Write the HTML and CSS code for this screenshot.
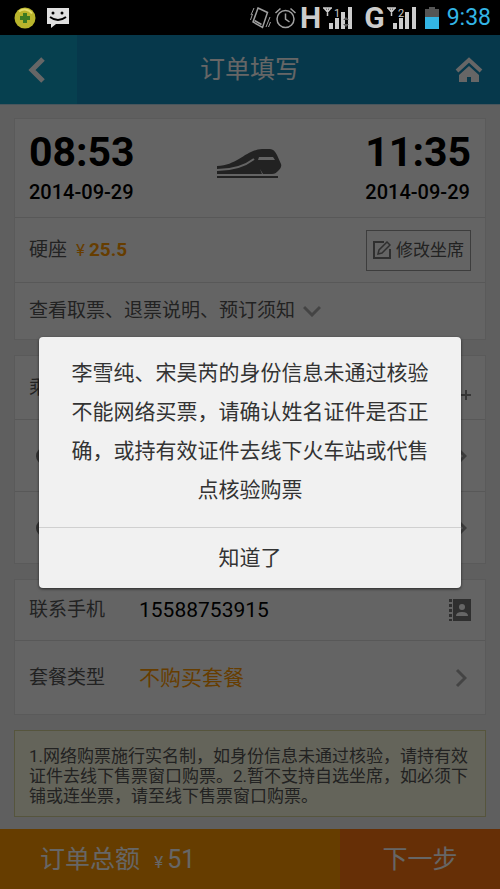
FILE: index.html
```html
<!DOCTYPE html>
<html lang="zh-CN">
<head>
    <meta charset="UTF-8">
    <meta name="viewport" content="width=device-width, initial-scale=1.0">
    <title>订单填写</title>
    <link rel="stylesheet" href="styles.css">
</head>
<body>
    <!-- Status bar -->
    <div class="status">
        <div class="status-left">
            <svg width="22" height="22" viewBox="0 0 22 22">
                <circle cx="11" cy="11" r="10.5" fill="#b9b52c"/>
                <path d="M2 6a10.5 10.5 0 0 0 14 14A10.5 10.5 0 0 1 2 6z" fill="#4f9a26"/>
                <path d="M5 4.500a9 9 0 0 1 13 2" fill="none" stroke="#e4dc6a" stroke-width="2"/>
                <path d="M9 6h4v3h3v4h-3v3H9v-3H6V9h3z" fill="#3c7a22"/>
            </svg>
            <svg width="24" height="22" viewBox="0 0 24 22">
                <path d="M1 1h22v16H10l-5 4v-4H1z" fill="#e0e0e0"/>
                <circle cx="7" cy="6" r="1.500" fill="#000"/>
                <circle cx="16" cy="6" r="1.500" fill="#000"/>
                <path d="M4 10q8 6 16 0" fill="none" stroke="#000" stroke-width="2"/>
            </svg>
        </div>
        <div class="status-right">
            <svg width="21" height="24" viewBox="0 0 21 24" fill="none" stroke="#a0a0a0" stroke-width="1.500">
                <path d="M8 2l9.500 4.500-5 15L3 16z"/>
                <path d="M4.500 14.500l7 4"/>
                <path d="M1 9l3-7M.5 14l2-6M20 11l-4 10M20.500 16l-2 5" stroke-width="1"/>
            </svg>
            <svg width="23" height="22" viewBox="0 0 23 22" fill="none" stroke="#a0a0a0" stroke-width="1.500">
                <circle cx="11.500" cy="12" r="8.500"/>
                <path d="M11.500 6.500V12l4 3M1.500 6l5-4.500M21.500 6l-5-4.500"/>
            </svg>
            <span class="signal">
                <b class="net">H</b>
                <svg width="30" height="24" viewBox="0 0 30 24">
                    <path d="M0 2h9M4.500 2v8M1 2l3.500 4L8 2" fill="none" stroke="#ccc" stroke-width="1.500"/>
                    <text class="sim" x="11" y="11">1</text>
                    <path d="M6 17h4v6H6zM12 12h4v11h-4zM18 6h4v17h-4zM25 1h4v22h-4z" fill="#ccc"/>
                    <path d="M23 11l3 3h-6zM23 21l3-3h-6z" fill="#555"/>
                </svg>
            </span>
            <span class="signal signal-last">
                <b class="net">G</b>
                <svg width="30" height="24" viewBox="0 0 30 24">
                    <path d="M0 2h9M4.500 2v8M1 2l3.500 4L8 2" fill="none" stroke="#ccc" stroke-width="1.500"/>
                    <text class="sim" x="11" y="11">2</text>
                    <path d="M6 17h4v6H6zM12 12h4v11h-4zM18 6h4v17h-4zM25 1h4v22h-4z" fill="#ccc"/>
                </svg>
            </span>
            <svg class="battery" width="14" height="22" viewBox="0 0 14 22">
                <path d="M4 0h6v2h4v8H0V2h4z" fill="#555"/>
                <path d="M0 10h14v12H0z" fill="#33b5e5"/>
            </svg>
            <span class="clock">9:38</span>
        </div>
    </div>

    <div class="app">
        <div class="header">
            <button class="back" type="button" aria-label="返回">
                <svg width="18" height="28" viewBox="0 0 18 28"><path d="M15 3L4 14l11 11" fill="none" stroke="#fff" stroke-width="5"/></svg>
            </button>
            <h1>订单填写</h1>
            <a class="home" href="#" aria-label="首页">
                <svg width="28" height="26" viewBox="0 0 28 26">
                    <path d="M2 14L14 3l12 11" fill="none" stroke="#fff" stroke-width="4"/>
                    <path d="M4 18L14 9l10 9v7h-8v-5h-4v5H4z" fill="#fff"/>
                </svg>
            </a>
        </div>

        <div class="content">
            <!-- Train -->
            <div class="card">
                <div class="row trip">
                    <div>
                        <div class="time">08:53</div>
                        <div class="date">2014-09-29</div>
                    </div>
                    <svg class="train" width="66" height="30" viewBox="0 0 66 30">
                        <path d="M0 17C22 16 28 1 45 0h8c3 0 5 2 7 6l4 9c1 3-1 5-3 7s-3 3-6 3H0z" fill="#555"/>
                        <path d="M0 21c16 0 28-4 37-11" fill="none" stroke="#fbfbfb" stroke-width="2"/>
                        <path d="M42 8h14l2 3H41zM43 20l3 5h-1z" fill="#fbfbfb"/>
                        <path d="M0 28h61" stroke="#555" stroke-width="2"/>
                    </svg>
                    <div>
                        <div class="time">11:35</div>
                        <div class="date">2014-09-29</div>
                    </div>
                </div>
                <div class="row seat">
                    <span>硬座</span>
                    <span class="price"><span class="yen">¥</span><b>25.5</b></span>
                    <button class="change" type="button">
                        <svg width="18" height="18" viewBox="0 0 18 18" fill="none" stroke="#777" stroke-width="2">
                            <path d="M11 1H1v16h16V8"/>
                            <path d="M5 13l1-4 8-8 3 3-8 8z" stroke-width="1.500"/>
                        </svg>
                        修改坐席
                    </button>
                </div>
                <a class="row rules" href="#">
                    查看取票、退票说明、预订须知
                    <svg width="18" height="12" viewBox="0 0 18 12"><path d="M1 2l8 8 8-8" fill="none" stroke="#aaa" stroke-width="3"/></svg>
                </a>
            </div>

            <!-- Passengers -->
            <div class="card">
                <div class="row passenger-title">
                    <span>乘客</span>
                    <svg class="end" width="26" height="26" viewBox="0 0 26 26">
                        <circle cx="10" cy="7" r="6" fill="#888"/>
                        <path d="M0 23q0-8 10-8 4 0 6 2v6z" fill="#888"/>
                        <path d="M16 20h10M21 15v10" stroke="#888" stroke-width="2"/>
                    </svg>
                </div>
                <div class="row passenger">
                    <svg width="20" height="20" viewBox="0 0 20 20"><circle cx="10" cy="10" r="9" fill="#777"/><path d="M5 10h10" stroke="#fff" stroke-width="2"/></svg>
                    <svg class="end arrow" width="12" height="20" viewBox="0 0 12 20"><path d="M2 2l8 8-8 8" fill="none" stroke="#999" stroke-width="3"/></svg>
                </div>
                <div class="row passenger">
                    <svg width="20" height="20" viewBox="0 0 20 20"><circle cx="10" cy="10" r="9" fill="#777"/><path d="M5 10h10" stroke="#fff" stroke-width="2"/></svg>
                    <svg class="end arrow" width="12" height="20" viewBox="0 0 12 20"><path d="M2 2l8 8-8 8" fill="none" stroke="#999" stroke-width="3"/></svg>
                </div>
            </div>

            <!-- Contact -->
            <div class="card">
                <div class="row phone">
                    <label for="phone">联系手机</label>
                    <input type="tel" id="phone" name="phone" value="15588753915">
                    <svg class="end" width="22" height="22" viewBox="0 0 22 22">
                        <path d="M4 0h18v22H4z" fill="#777"/>
                        <path d="M1.500 0v22" stroke="#777" stroke-width="3" stroke-dasharray="3 2"/>
                        <circle cx="13" cy="8" r="3" fill="#fff"/>
                        <path d="M7 17q0-4 6-4t6 4z" fill="#fff"/>
                    </svg>
                </div>
                <div class="row package">
                    <span>套餐类型</span>
                    <span class="package-name">不购买套餐</span>
                    <svg class="end arrow" width="12" height="20" viewBox="0 0 12 20"><path d="M2 2l8 8-8 8" fill="none" stroke="#aaa" stroke-width="3"/></svg>
                </div>
            </div>

            <p class="notice">1.网络购票施行实名制，如身份信息未通过核验，请持有效证件去线下售票窗口购票。2.暂不支持自选坐席，如必须下铺或连坐票，请至线下售票窗口购票。</p>
        </div>

        <div class="footer">
            <div class="total">订单总额 <span class="yen">¥</span>51</div>
            <button class="next" type="button">下一步</button>
        </div>

        <!-- Dialog -->
        <div class="overlay">
            <div class="dialog" role="dialog">
                <p>李雪纯、宋昊芮的身份信息未通过核验不能网络买票，请确认姓名证件是否正确，或持有效证件去线下火车站或代售点核验购票</p>
                <button type="button">知道了</button>
            </div>
        </div>
    </div>
</body>
</html>
```
FILE: styles.css
```css
* {
    box-sizing: border-box;
}
body {
    display: flex;
    flex-direction: column;
    min-height: 100vh;
    margin: 0;
    background: #000;
    color: #555;
    font-family: Roboto, "Noto Sans CJK SC", sans-serif;
    font-size: 19px;
    line-height: 24px;
}
button, input {
    margin: 0;
    padding: 0;
    border: 0;
    background: none;
    color: inherit;
    font-family: inherit;
    font-size: inherit;
    line-height: inherit;
}
a {
    color: inherit;
    text-decoration: none;
}
svg {
    display: block;
    flex: none;
}
.status {
    display: flex;
    justify-content: space-between;
    align-items: center;
    height: 35px;
    padding: 0 9px 0 14px;
}
.status-left {
    display: flex;
    gap: 10px;
}
.status-right {
    display: flex;
    align-items: center;
    gap: 3px;
}
.signal {
    display: flex;
    align-items: center;
    gap: 2px;
}
.signal-last {
    margin-left: 8px;
}
.net {
    color: #ccc;
    font-size: 30px;
    font-weight: 700;
}
.sim {
    fill: #ccc;
    font-size: 11px;
}
.battery {
    margin: 0 5px;
}
.clock {
    color: #33b5e5;
    font-size: 23px;
}
.app {
    position: relative;
    display: flex;
    flex: 1;
    flex-direction: column;
    background: #ededed;
}
.header {
    display: flex;
    align-items: center;
    height: 70px;
    border-bottom: 1px solid #b5d5e5;
    background: #0f8cbb;
    color: #fff;
}
.header h1 {
    flex: 1;
    margin: 0;
    font-size: 25px;
    font-weight: 400;
    text-align: center;
}
.back {
    display: flex;
    align-items: center;
    justify-content: center;
    width: 77px;
    height: 100%;
    padding-right: 4px;
    background: #11a0c6;
}
.home {
    display: flex;
    justify-content: flex-end;
    width: 77px;
    padding-right: 17px;
}
.content {
    display: flex;
    flex: 1;
    flex-direction: column;
    gap: 15px;
    padding: 13px 14px 12px;
}
.card {
    border: 1px solid #e0e0e0;
    background: #fbfbfb;
}
.row {
    display: flex;
    align-items: center;
    padding: 0 14px;
}
.row + .row {
    border-top: 1px solid #dcdcdc;
}
.end {
    margin-left: auto;
}
.arrow {
    margin-right: 4px;
}
.trip {
    justify-content: space-between;
    height: 98px;
    color: #000;
}
.train {
    margin-bottom: 8px;
}
.time {
    font-size: 41px;
    font-weight: 700;
    line-height: 48px;
}
.date {
    font-size: 20px;
    font-weight: 500;
    line-height: 32px;
}
.seat {
    height: 65px;
}
.price {
    margin-left: 9px;
    color: #f90;
}
.yen {
    margin-right: 4px;
    font-size: 17px;
}
.change {
    display: flex;
    align-items: center;
    gap: 5px;
    height: 41px;
    margin-left: auto;
    padding: 0 6px;
    border: 1px solid #999;
    font-size: 17px;
}
.rules {
    gap: 8px;
    height: 57px;
}
.passenger-title {
    height: 63px;
}
.passenger {
    height: 72px;
    padding-left: 20px;
}
.phone {
    gap: 34px;
    height: 60px;
}
.phone input {
    flex: 1;
    min-width: 0;
    color: #000;
    font-size: 21px;
}
.package {
    gap: 34px;
    height: 74px;
}
.package-name {
    color: #f90;
    font-size: 21px;
}
.notice {
    margin: 0;
    padding: 15px 13px 10px 14px;
    border: 1px solid #d8d49a;
    background: #fbfae0;
    font-size: 17px;
    line-height: 20px;
}
.footer {
    display: flex;
    height: 61px;
    background: #f90;
    color: #fff;
    font-size: 25px;
}
.total {
    flex: 1;
    padding-left: 40px;
    line-height: 61px;
}
.total .yen {
    margin-left: 8px;
}
.next {
    width: 32%;
    background: #ff7510;
}
.overlay {
    position: absolute;
    inset: 0;
    display: flex;
    align-items: center;
    justify-content: center;
    background: rgba(0, 0, 0, 0.6);
}
.dialog {
    width: 422px;
    max-width: 90%;
    border-radius: 4px;
    background: #f1f1f1;
    box-shadow: 0 1px 3px rgba(0, 0, 0, 0.6);
    color: #333;
    font-size: 21px;
}
.dialog p {
    margin: 0;
    padding: 17px 30px;
    line-height: 39px;
    text-align: center;
}
.dialog button {
    width: 100%;
    height: 61px;
    border-top: 1px solid #d0d0d0;
}
```
